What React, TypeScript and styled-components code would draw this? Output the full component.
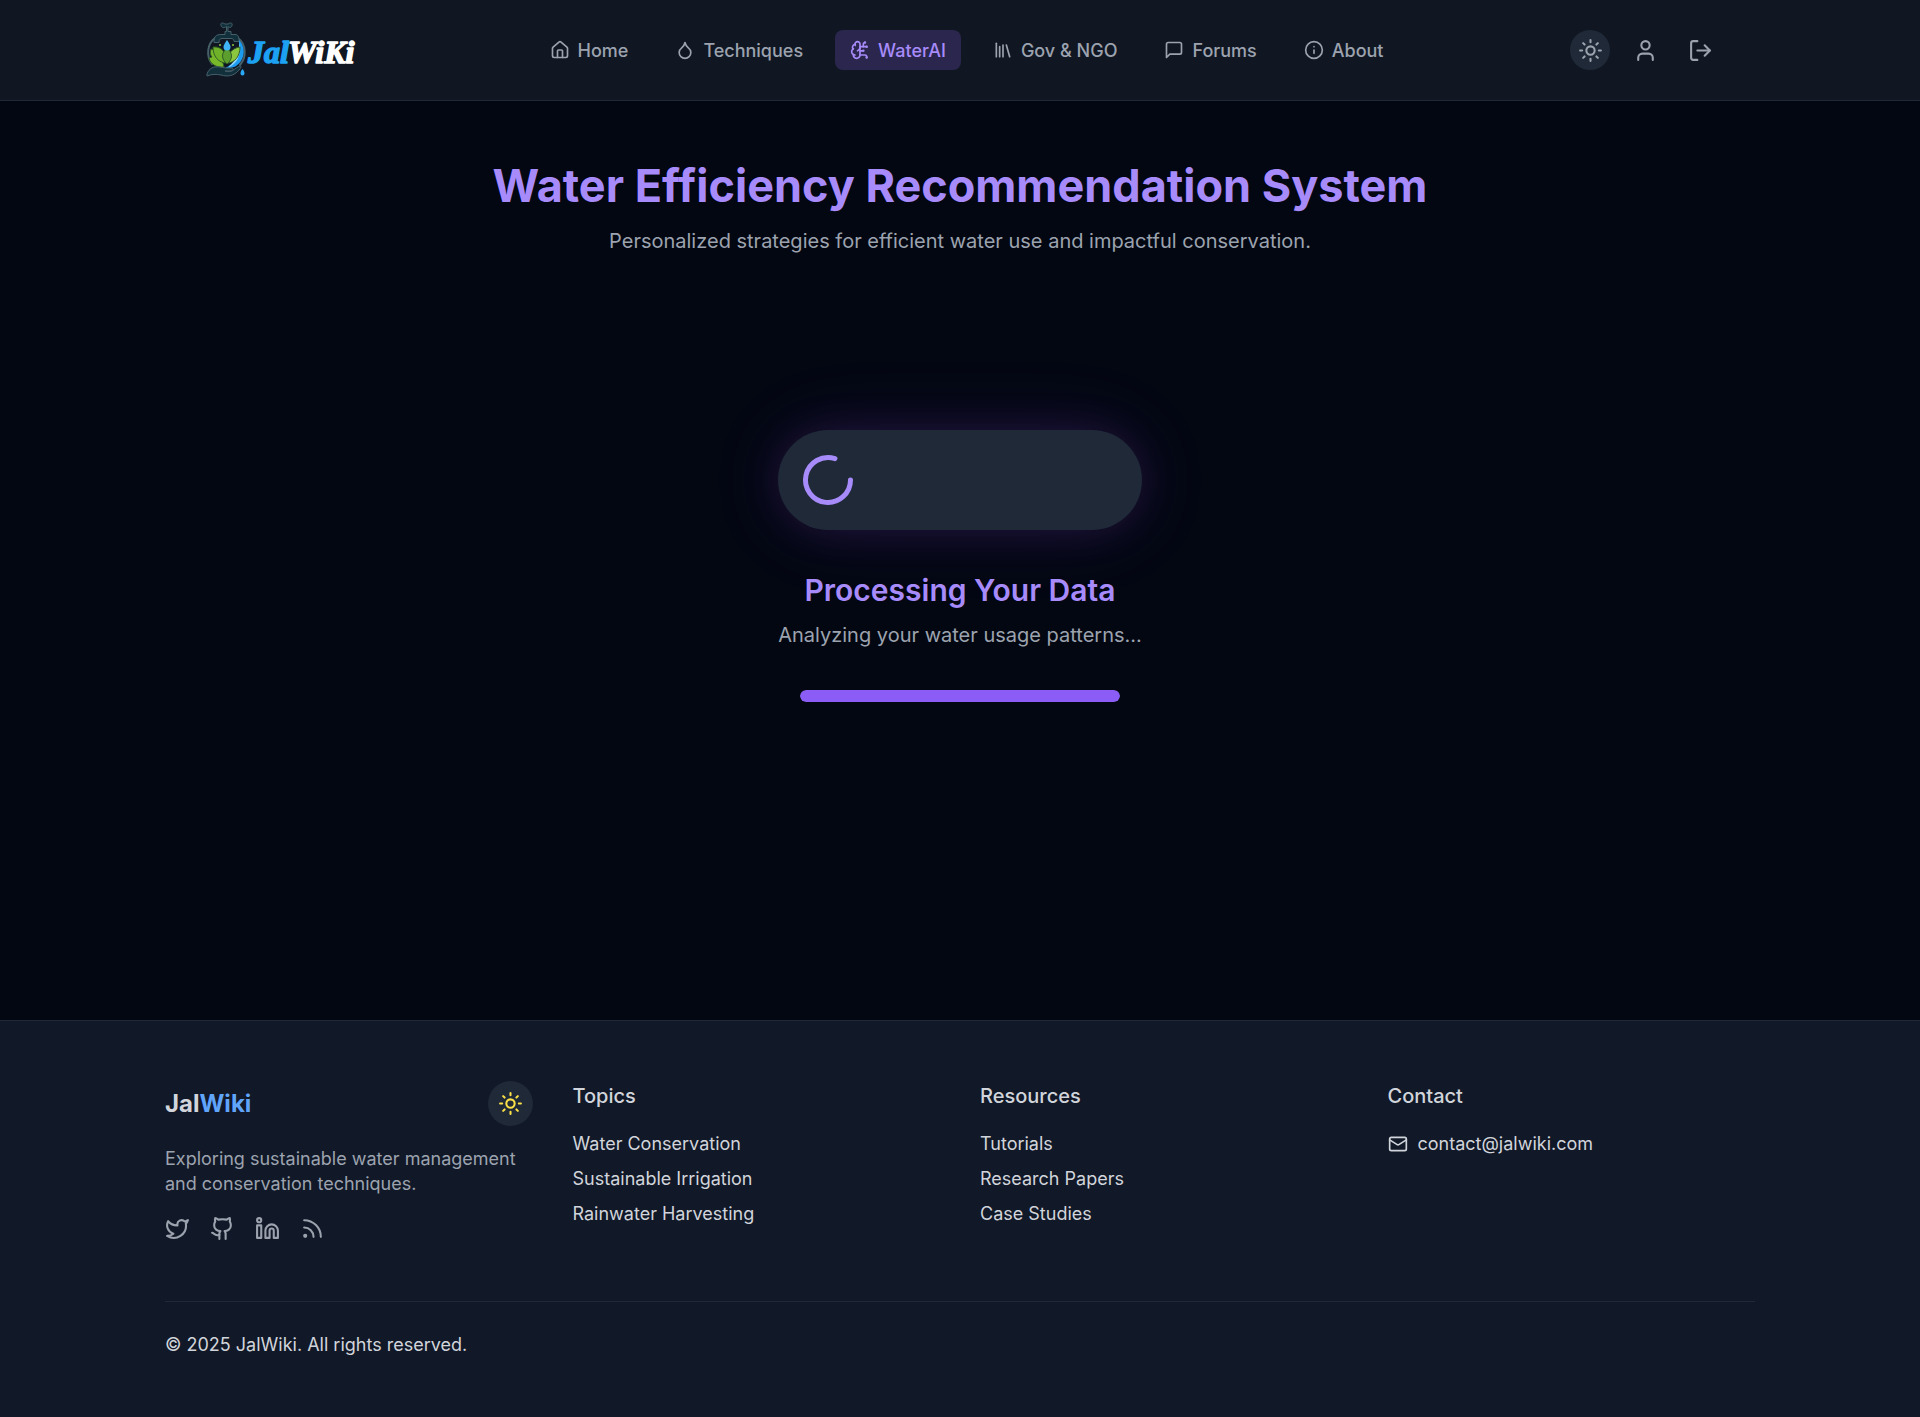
import React from 'react';
import styled, { createGlobalStyle } from 'styled-components';
import {
  House, Droplet, BrainCircuit, Library, Info, Sun, User, LogOut,
  LoaderCircle, Twitter, Github, Linkedin, Rss, Mail,
} from 'lucide-react';

const GlobalStyle = createGlobalStyle`
  *, *::before, *::after { box-sizing: border-box; }
  body {
    margin: 0;
    background: #030712;
    color: #d1d5db;
    font-family: Inter, "Noto Sans", sans-serif;
    font-size: 18px;
    line-height: 25px;
  }
  h1, h2, h3, p, ul { margin: 0; padding: 0; }
  ul { list-style: none; }
  a { color: inherit; text-decoration: none; }
  button { font: inherit; border: 0; padding: 0; cursor: pointer; }
  svg { display: block; flex-shrink: 0; }
`;

const Page = styled.div`
  min-height: 100vh;
  display: flex;
  flex-direction: column;
`;

const Header = styled.header`
  background: #101723;
  border-bottom: 1px solid #1f2937;
`;

const HeaderInner = styled.div`
  max-width: 1600px;
  height: 100px;
  margin: 0 auto;
  padding: 0 40px;
  display: flex;
  align-items: center;
  justify-content: space-between;
`;

const LogoText = styled.text`
  font-family: "Liberation Serif", serif;
  font-size: 32px;
  font-weight: 700;
  font-style: italic;
  stroke-width: 1.5;
  stroke-linejoin: round;
`;

const Nav = styled.nav`
  display: flex;
  gap: 17px;
`;

const NavLink = styled.a<{ $active?: boolean }>`
  display: flex;
  align-items: center;
  gap: 8px;
  height: 40px;
  padding: 0 15px;
  border-radius: 8px;
  font-weight: 500;
  white-space: nowrap;
  color: ${({ $active }) => ($active ? '#a78bfa' : '#9ca3af')};
  background: ${({ $active }) => ($active ? '#2b264d' : 'transparent')};
`;

const Actions = styled.div`
  display: flex;
  gap: 15px;
`;

const RoundButton = styled.button<{ $size: number; $filled?: boolean; $color: string }>`
  width: ${({ $size }) => $size}px;
  height: ${({ $size }) => $size}px;
  display: flex;
  align-items: center;
  justify-content: center;
  border-radius: 50%;
  color: ${({ $color }) => $color};
  background: ${({ $filled }) => ($filled ? '#1f2937' : 'transparent')};
`;

const Main = styled.main`
  flex: 1;
  display: flex;
  flex-direction: column;
  align-items: center;
  padding: 60px 40px;
  text-align: center;
`;

const Title = styled.h1`
  color: #a78bfa;
  font-size: 45px;
  line-height: 50px;
  font-weight: 700;
`;

const Subtitle = styled.p`
  margin-top: 15px;
  color: #9ca3af;
  font-size: 20px;
  line-height: 30px;
`;

const Loading = styled.section`
  min-height: 500px;
  margin-top: 60px;
  display: flex;
  flex-direction: column;
  align-items: center;
  justify-content: center;
`;

const LoadingBody = styled.div`
  display: flex;
  flex-direction: column;
`;

const SpinnerPill = styled.div`
  padding: 20px;
  border-radius: 50px;
  background: #1f2937;
  color: #a78bfa;
  box-shadow: 0 0 40px rgba(168, 85, 247, 0.13), 0 0 80px rgba(168, 85, 247, 0.11);
`;

const LoadingTitle = styled.h2`
  margin-top: 40px;
  color: #a78bfa;
  font-size: 30px;
  line-height: 40px;
  font-weight: 600;
`;

const LoadingText = styled.p`
  margin-top: 10px;
  color: #9ca3af;
  font-size: 20px;
  line-height: 30px;
`;

const Track = styled.div`
  width: 320px;
  height: 12px;
  margin-top: 40px;
  border-radius: 6px;
  overflow: hidden;
  background: #1f2937;
`;

const Fill = styled.div`
  height: 100%;
  border-radius: 6px;
  background: #8b5cf6;
`;

const Footer = styled.footer`
  padding: 60px 40px;
  background: #111827;
  border-top: 1px solid #1f2937;
`;

const FooterInner = styled.div`
  max-width: 1590px;
  margin: 0 auto;
`;

const Columns = styled.div`
  display: grid;
  grid-template-columns: repeat(4, minmax(0, 1fr));
  gap: 40px;
  padding-bottom: 60px;
  border-bottom: 1px solid #1f2937;
`;

const BrandRow = styled.div`
  display: flex;
  align-items: center;
  justify-content: space-between;
`;

const Brand = styled.a`
  font-size: 24px;
  line-height: 35px;
  font-weight: 700;
  span { color: #60a5fa; }
`;

const About = styled.p`
  margin-top: 20px;
  color: #9ca3af;
`;

const Socials = styled.div`
  display: flex;
  gap: 20px;
  margin-top: 20px;
  color: #9ca3af;
`;

const ColumnTitle = styled.h3`
  font-size: 20px;
  line-height: 30px;
  font-weight: 500;
`;

const LinkList = styled.ul`
  display: flex;
  flex-direction: column;
  gap: 10px;
  margin-top: 20px;
`;

const MailLink = styled.a`
  display: flex;
  align-items: center;
  gap: 10px;
`;

const Copyright = styled.p`
  margin-top: 30px;
`;

const ChatIcon = () => (
  <svg width="20" height="20" viewBox="0 0 24 24" fill="none" stroke="currentColor" strokeWidth="2" strokeLinecap="round" strokeLinejoin="round">
    <path d="M21 15a2 2 0 0 1-2 2H7l-4 4V5a2 2 0 0 1 2-2h14a2 2 0 0 1 2 2z" />
  </svg>
);

const Logo = () => (
  <svg width="163" height="60" viewBox="0 0 163 60" role="img" aria-label="JalWiki">
    {/* ring around the leaves */}
    <path d="M15 18C7 24 6 36 12 44M38 18c8 6 9 19 2 27" fill="none" stroke="#46606a" strokeWidth="2" strokeLinecap="round" />
    {/* tap */}
    <g stroke="#46606a" strokeWidth="1" fill="#12303c" strokeLinejoin="round">
      <path d="M21 5.500c-1-3 2-3 4-1.500h3c2-1.500 5-1.500 4 1.500s-3 2-4 1H28v5h3v3h4c3 0 4 2 4 7h-5c0-2-1-3-3-3h-9c-2 0-3 1-3 4h-5c0-6 2-8 7-8h4v-3h1.500v-5C24 8 22 8.500 21 5.500z" />
    </g>
    {/* water and leaves */}
    <path d="M39 20c5 5 6 13 3 19-3 7-10 10-17 9 10-4 15-13 14-28z" fill="#1d9bf0" />
    <path d="M39 21c1 12-3 20-11 26 9-2 14-12 11-26z" fill="#8ed4fb" />
    <path d="M11 29c4 1 5 4 5 7 4 1 7 5 8 11-7 1-14-3-15-9l3-1c-2-2-2-5-1-8z" fill="#76b82a" stroke="#315d24" strokeWidth="1" />
    <path d="M27 43C18 43 13 36 13 27c8-1 14 5 14 16z" fill="#6fb22a" stroke="#315d24" strokeWidth="1" />
    <path d="M27 43c0-9 5-15 13-16 0 9-5 16-13 16z" fill="#8cc63f" stroke="#315d24" strokeWidth="1" />
    <path d="M27 44c-6-5-6-11 0-16 6 5 6 11 0 16z" fill="#5c9e2e" stroke="#315d24" strokeWidth="1" />
    <path d="M27 20c2 3 3.500 5 3.500 7a3.500 3.500 0 0 1-7 0c0-2 1.500-4 3.500-7z" fill="#3fb4f6" />
    <circle cx="20" cy="25" r="1" fill="#8cc63f" />
    <circle cx="33" cy="25" r="1" fill="#8cc63f" />
    {/* hand */}
    <path d="M7 54c2-6 7-8 13-7 4 1 7 1 11 1 3 0 3 3 0 3h-6c7 2 10-3 15-5 2 0 1 2-1 4-5 6-11 7-18 5-5-1-9-1-14 1z" fill="#12303c" stroke="#46606a" strokeWidth="1" strokeLinejoin="round" />
    <path d="M42.500 49c1.500 2 2 3 2 4.500a2 2 0 0 1-4 0c0-1.500.5-2.500 2-4.500z" fill="#29a8f5" />
    <LogoText x="48" y="43" fill="#1da1f2" stroke="#1da1f2">Jal</LogoText>
    <LogoText x="88" y="43" fill="#ffffff" stroke="#ffffff">WiKi</LogoText>
  </svg>
);

const navItems = [
  { label: 'Home', icon: <House size={20} /> },
  { label: 'Techniques', icon: <Droplet size={20} /> },
  { label: 'WaterAI', icon: <BrainCircuit size={20} />, active: true },
  { label: 'Gov & NGO', icon: <Library size={20} /> },
  { label: 'Forums', icon: <ChatIcon /> },
  { label: 'About', icon: <Info size={20} /> },
];

const linkColumns = [
  { title: 'Topics', links: ['Water Conservation', 'Sustainable Irrigation', 'Rainwater Harvesting'] },
  { title: 'Resources', links: ['Tutorials', 'Research Papers', 'Case Studies'] },
];

const socials = [
  { label: 'Twitter', Icon: Twitter },
  { label: 'GitHub', Icon: Github },
  { label: 'LinkedIn', Icon: Linkedin },
  { label: 'RSS', Icon: Rss },
];

export default function App() {
  const progress = 100;
  return (
    <Page>
      <GlobalStyle />
      <Header>
        <HeaderInner>
          <a href="#home"><Logo /></a>
          <Nav>
            {navItems.map(({ label, icon, active }) => (
              <NavLink key={label} href="#" $active={active} aria-current={active ? 'page' : undefined}>
                {icon}
                {label}
              </NavLink>
            ))}
          </Nav>
          <Actions>
            <RoundButton $size={40} $filled $color="#9ca3af" aria-label="Toggle theme"><Sun size={25} /></RoundButton>
            <RoundButton $size={40} $color="#9ca3af" aria-label="Profile"><User size={25} /></RoundButton>
            <RoundButton $size={40} $color="#9ca3af" aria-label="Log out"><LogOut size={25} /></RoundButton>
          </Actions>
        </HeaderInner>
      </Header>
      <Main>
        <Title>Water Efficiency Recommendation System</Title>
        <Subtitle>Personalized strategies for efficient water use and impactful conservation.</Subtitle>
        <Loading>
          <LoadingBody>
            <SpinnerPill><LoaderCircle size={60} /></SpinnerPill>
            <LoadingTitle>Processing Your Data</LoadingTitle>
            <LoadingText>Analyzing your water usage patterns...</LoadingText>
          </LoadingBody>
          <Track role="progressbar" aria-label="Analysis progress" aria-valuenow={progress}>
            <Fill style={{ width: `${progress}%` }} />
          </Track>
        </Loading>
      </Main>
      <Footer>
        <FooterInner>
          <Columns>
            <div>
              <BrandRow>
                <Brand href="#home">Jal<span>Wiki</span></Brand>
                <RoundButton $size={45} $filled $color="#fde047" aria-label="Toggle theme"><Sun size={25} /></RoundButton>
              </BrandRow>
              <About>Exploring sustainable water management and conservation techniques.</About>
              <Socials>
                {socials.map(({ label, Icon }) => (
                  <a key={label} href="#" aria-label={label}><Icon size={25} /></a>
                ))}
              </Socials>
            </div>
            {linkColumns.map(({ title, links }) => (
              <div key={title}>
                <ColumnTitle>{title}</ColumnTitle>
                <LinkList>
                  {links.map((link) => (
                    <li key={link}><a href="#">{link}</a></li>
                  ))}
                </LinkList>
              </div>
            ))}
            <div>
              <ColumnTitle>Contact</ColumnTitle>
              <LinkList>
                <li><MailLink href="mailto:contact@jalwiki.com"><Mail size={20} />contact@jalwiki.com</MailLink></li>
              </LinkList>
            </div>
          </Columns>
          <Copyright>© 2025 JalWiki. All rights reserved.</Copyright>
        </FooterInner>
      </Footer>
    </Page>
  );
}
